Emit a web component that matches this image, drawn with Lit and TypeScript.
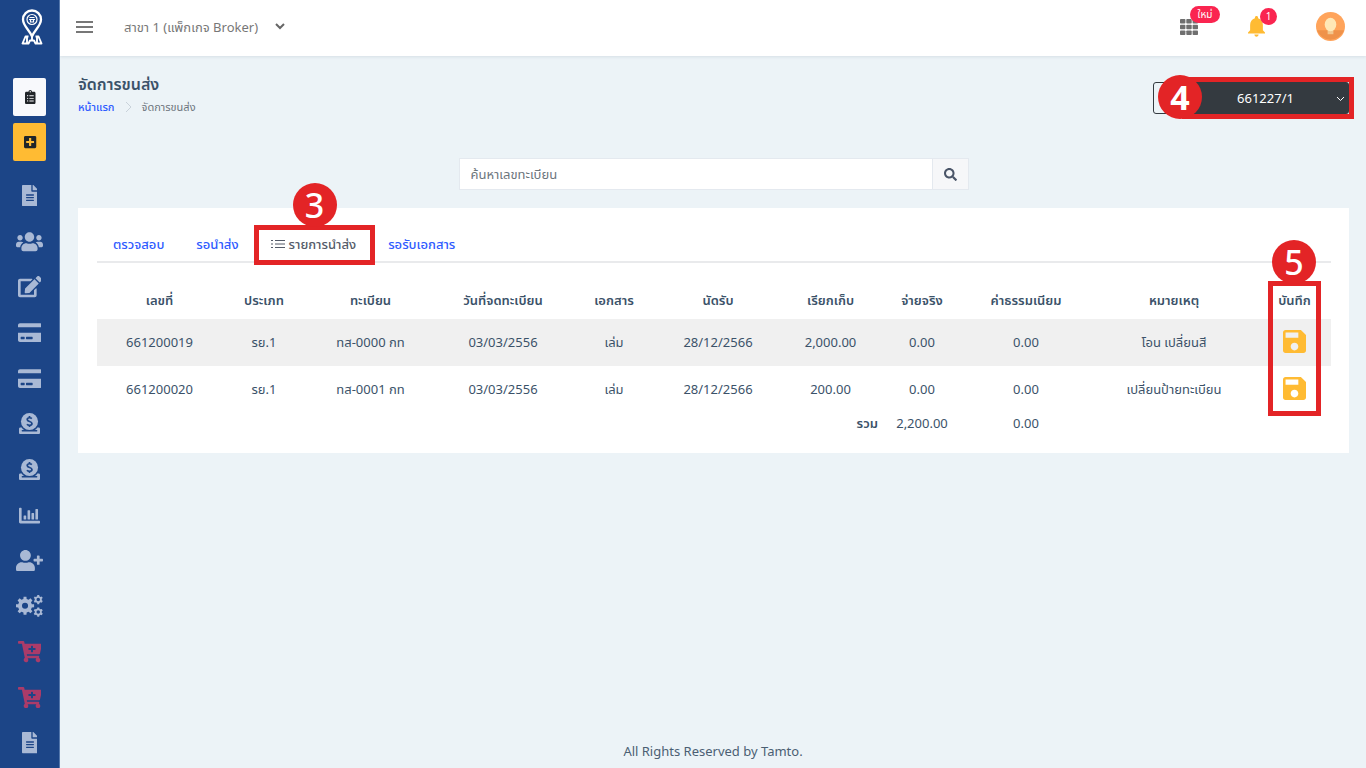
import { LitElement, html, css, svg } from "lit";
import { customElement, state } from "lit/decorators.js";
import { classMap } from "lit/directives/class-map.js";

/** Outline of a cog wheel with a round hole in its middle. */
const gear = (cx: number, cy: number, r: number, teeth: number, hole: number) => {
  const step = (Math.PI * 2) / teeth;
  const pt = (rad: number, a: number) =>
    `${(cx + rad * Math.cos(a)).toFixed(1)} ${(cy + rad * Math.sin(a)).toFixed(1)}`;
  let d = "";
  for (let i = 0; i < teeth; i++) {
    const a = i * step - Math.PI / 2;
    d += `${i ? "L" : "M"}${pt(r * 0.76, a - step * 0.3)}L${pt(r, a - step * 0.2)}L${pt(r, a + step * 0.2)}L${pt(r * 0.76, a + step * 0.3)}`;
  }
  return `${d}ZM${cx - hole} ${cy}a${hole} ${hole} 0 1 0 ${hole * 2} 0a${hole} ${hole} 0 1 0 ${-hole * 2} 0Z`;
};

const icons = {
  clipboard: svg`<svg viewBox="0 0 384 512" class="i14"><path fill="currentColor" d="M336 64h-80c0-35.300-28.700-64-64-64s-64 28.700-64 64H48C21.500 64 0 85.500 0 112v352c0 26.500 21.500 48 48 48h288c26.500 0 48-21.500 48-48V112c0-26.500-21.500-48-48-48zM96 424c-13.300 0-24-10.700-24-24s10.700-24 24-24 24 10.700 24 24-10.700 24-24 24zm0-96c-13.300 0-24-10.700-24-24s10.700-24 24-24 24 10.700 24 24-10.700 24-24 24zm0-96c-13.300 0-24-10.700-24-24s10.700-24 24-24 24 10.700 24 24-10.700 24-24 24zm96-192c13.300 0 24 10.700 24 24s-10.700 24-24 24-24-10.700-24-24 10.700-24 24-24zm128 368c0 4.400-3.600 8-8 8H168c-4.400 0-8-3.600-8-8v-16c0-4.400 3.600-8 8-8h144c4.400 0 8 3.600 8 8v16zm0-96c0 4.400-3.600 8-8 8H168c-4.400 0-8-3.600-8-8v-16c0-4.400 3.600-8 8-8h144c4.400 0 8 3.600 8 8v16zm0-96c0 4.400-3.600 8-8 8H168c-4.400 0-8-3.600-8-8v-16c0-4.400 3.600-8 8-8h144c4.400 0 8 3.600 8 8v16z"/></svg>`,
  plusSquare: svg`<svg viewBox="0 0 448 512" class="i14"><path fill="currentColor" d="M400 32H48C21.500 32 0 53.500 0 80v352c0 26.500 21.500 48 48 48h352c26.500 0 48-21.500 48-48V80c0-26.500-21.500-48-48-48zm-32 252c0 6.600-5.400 12-12 12h-92v92c0 6.600-5.400 12-12 12h-56c-6.600 0-12-5.400-12-12v-92H92c-6.600 0-12-5.400-12-12v-56c0-6.600 5.400-12 12-12h92v-92c0-6.600 5.400-12 12-12h56c6.600 0 12 5.400 12 12v92h92c6.600 0 12 5.400 12 12v56z"/></svg>`,
  file: svg`<svg viewBox="0 0 384 512"><path fill="currentColor" d="M224 136V0H24C10.700 0 0 10.700 0 24v464c0 13.300 10.700 24 24 24h336c13.300 0 24-10.700 24-24V160H248c-13.200 0-24-10.800-24-24zm64 236c0 6.600-5.400 12-12 12H108c-6.600 0-12-5.400-12-12v-8c0-6.600 5.400-12 12-12h168c6.600 0 12 5.400 12 12v8zm0-64c0 6.600-5.400 12-12 12H108c-6.600 0-12-5.400-12-12v-8c0-6.600 5.400-12 12-12h168c6.600 0 12 5.400 12 12v8zm0-72v8c0 6.600-5.400 12-12 12H108c-6.600 0-12-5.400-12-12v-8c0-6.600 5.400-12 12-12h168c6.600 0 12 5.400 12 12zm96-114.100v6.100H256V0h6.100c6.400 0 12.500 2.500 17 7l97.900 98c4.500 4.500 7 10.600 7 16.900z"/></svg>`,
  users: svg`<svg viewBox="0 0 640 512"><path fill="currentColor" d="M96 224c35.300 0 64-28.700 64-64s-28.700-64-64-64-64 28.700-64 64 28.700 64 64 64zm448 0c35.300 0 64-28.700 64-64s-28.700-64-64-64-64 28.700-64 64 28.700 64 64 64zm32 32h-64c-17.600 0-33.500 7.100-45.100 18.600 40.300 22.100 68.900 62 75.100 109.400h66c17.700 0 32-14.300 32-32v-32c0-35.300-28.700-64-64-64zm-256 0c61.900 0 112-50.100 112-112S381.900 32 320 32 208 82.100 208 144s50.100 112 112 112zm76.800 32h-8.300c-20.800 10-43.900 16-68.500 16s-47.600-6-68.500-16h-8.300C179.600 288 128 339.600 128 403.200V432c0 26.500 21.500 48 48 48h288c26.500 0 48-21.500 48-48v-28.800c0-63.600-51.600-115.200-115.200-115.200zm-223.700-13.400C161.500 263.100 145.600 256 128 256H64c-35.300 0-64 28.700-64 64v32c0 17.700 14.300 32 32 32h65.900c6.300-47.400 34.900-87.300 75.200-109.400z"/></svg>`,
  edit: svg`<svg viewBox="0 0 576 512"><path fill="currentColor" d="M402.600 83.200l90.200 90.200c3.800 3.800 3.800 10 0 13.800L274.400 405.600l-92.800 10.300c-12.400 1.400-22.900-9.100-21.500-21.500l10.300-92.800L388.800 83.200c3.800-3.800 10-3.800 13.800 0zm162-22.900l-48.800-48.800c-15.200-15.200-39.900-15.200-55.200 0l-35.400 35.400c-3.800 3.800-3.800 10 0 13.800l90.200 90.200c3.800 3.800 10 3.800 13.800 0l35.400-35.400c15.200-15.300 15.200-40 0-55.200zM384 346.200V448H64V128h229.800c3.200 0 6.200-1.300 8.500-3.500l40-40c7.600-7.600 2.200-20.500-8.500-20.500H48C21.500 64 0 85.500 0 112v352c0 26.500 21.500 48 48 48h352c26.500 0 48-21.500 48-48V306.200c0-10.700-12.900-16-20.500-8.500l-40 40c-2.200 2.300-3.500 5.300-3.500 8.500z"/></svg>`,
  card: svg`<svg viewBox="0 0 576 512"><path fill="currentColor" d="M0 432c0 26.500 21.500 48 48 48h480c26.500 0 48-21.500 48-48V256H0v176zm192-68c0-6.600 5.400-12 12-12h136c6.600 0 12 5.400 12 12v40c0 6.600-5.400 12-12 12H204c-6.600 0-12-5.400-12-12v-40zm-128 0c0-6.600 5.400-12 12-12h72c6.600 0 12 5.400 12 12v40c0 6.600-5.400 12-12 12H76c-6.600 0-12-5.400-12-12v-40zM576 80v48H0V80c0-26.500 21.500-48 48-48h480c26.500 0 48 21.500 48 48z"/></svg>`,
  donate: svg`<svg viewBox="0 0 512 512"><circle cx="256" cy="208" r="208" fill="currentColor"/><path d="M312 138c-12-14-30-22-54-22-34 0-58 18-58 44 0 62 116 34 116 98 0 28-26 46-60 46-26 0-48-10-62-28M256 76v40M256 302v40" fill="none" stroke="#1c4587" stroke-width="42"/><path fill="currentColor" d="M480 352h-33c-16 24-36 46-60 64h48c7 0 13 7 13 16s-6 16-13 16H77c-7 0-13-7-13-16s6-16 13-16h48c-24-18-44-40-60-64H32c-18 0-32 14-32 32v96c0 18 14 32 32 32h448c18 0 32-14 32-32v-96c0-18-14-32-32-32z"/></svg>`,
  chart: svg`<svg viewBox="0 0 512 512"><path fill="currentColor" d="M44 64h-24C9 64 0 73 0 84v332c0 18 14 32 32 32h464c9 0 16-7 16-16v-32c0-9-7-16-16-16H64V84c0-11-9-20-20-20z"/><path fill="currentColor" d="M125 256h38c7 0 13 6 13 13v70c0 7-6 13-13 13h-38c-7 0-13-6-13-13v-70c0-7 6-13 13-13zM221 128h38c7 0 13 6 13 13v198c0 7-6 13-13 13h-38c-7 0-13-6-13-13V141c0-7 6-13 13-13zM317 192h38c7 0 13 6 13 13v134c0 7-6 13-13 13h-38c-7 0-13-6-13-13V205c0-7 6-13 13-13zM413 96h38c7 0 13 6 13 13v230c0 7-6 13-13 13h-38c-7 0-13-6-13-13V109c0-7 6-13 13-13z"/></svg>`,
  userPlus: svg`<svg viewBox="0 0 640 512"><path fill="currentColor" d="M624 208h-64v-64c0-8.800-7.200-16-16-16h-32c-8.800 0-16 7.200-16 16v64h-64c-8.800 0-16 7.200-16 16v32c0 8.800 7.200 16 16 16h64v64c0 8.800 7.200 16 16 16h32c8.800 0 16-7.200 16-16v-64h64c8.800 0 16-7.200 16-16v-32c0-8.800-7.200-16-16-16zm-400 48c70.700 0 128-57.300 128-128S294.700 0 224 0 96 57.300 96 128s57.300 128 128 128zm89.600 32h-16.700c-22.200 10.200-46.900 16-72.900 16s-50.600-5.800-72.900-16h-16.700C60.200 288 0 348.200 0 422.400V464c0 26.500 21.500 48 48 48h352c26.500 0 48-21.500 48-48v-41.600c0-74.200-60.200-134.400-134.400-134.400z"/></svg>`,
  cogs: svg`<svg viewBox="0 0 640 512"><path fill="currentColor" fill-rule="evenodd" d="${gear(214, 256, 218, 8, 72)}${gear(528, 108, 112, 6, 42)}${gear(528, 404, 112, 6, 42)}"/></svg>`,
  cart: svg`<svg viewBox="0 0 576 512"><path fill="currentColor" fill-rule="evenodd" d="M504.700 320H211.600l6.500 32h268.400c15.400 0 26.800 14.300 23.400 29.300l-5.500 24.300c18.700 9.100 31.600 28.200 31.600 50.400 0 31.200-25.500 56.400-56.800 56-29.800-.400-54.400-24.600-55.200-54.400-.400-16.300 6.100-31 16.800-41.500H231.200c10.400 10.200 16.800 24.300 16.800 40 0 31.800-26.500 57.400-58.700 55.900-28.500-1.300-51.800-24.400-53.300-52.900-1.200-22 10.400-41.500 28.100-51.600L93.900 64H24C10.700 64 0 53.300 0 40V24C0 10.700 10.700 0 24 0h102.500c11.400 0 21.200 8 23.500 19.200l9.200 44.800H552c15.400 0 26.800 14.300 23.400 29.300l-47.300 208c-2.500 10.900-12.200 18.700-23.400 18.700zM408 168h-48v-40c0-8.800-7.200-16-16-16h-16c-8.800 0-16 7.200-16 16v40h-48c-8.800 0-16 7.200-16 16v16c0 8.800 7.200 16 16 16h48v40c0 8.800 7.200 16 16 16h16c8.800 0 16-7.200 16-16v-40h48c8.800 0 16-7.200 16-16v-16c0-8.800-7.200-16-16-16z"/></svg>`,
  search: svg`<svg viewBox="0 0 512 512" class="i13"><path fill="currentColor" d="M505 442.700L405.300 343c-4.500-4.500-10.600-7-17-7H372c27.600-35.300 44-79.700 44-128C416 93.100 322.900 0 208 0S0 93.100 0 208s93.100 208 208 208c48.300 0 92.700-16.400 128-44v16.300c0 6.400 2.500 12.500 7 17l99.700 99.700c9.400 9.400 24.600 9.400 33.900 0l28.300-28.300c9.400-9.400 9.400-24.600.1-34zM208 336c-70.700 0-128-57.200-128-128 0-70.700 57.200-128 128-128 70.700 0 128 57.200 128 128 0 70.700-57.200 128-128 128z"/></svg>`,
  save: svg`<svg viewBox="3 3 18 18"><path fill="currentColor" d="M17 3H5c-1.110 0-2 .9-2 2v14c0 1.100.89 2 2 2h14c1.100 0 2-.9 2-2V7l-4-4zm-5 16c-1.660 0-3-1.340-3-3s1.340-3 3-3 3 1.340 3 3-1.340 3-3 3zm3-10H5V5h10v4z"/></svg>`,
  bell: svg`<svg viewBox="4 2.500 16 19.500"><path fill="currentColor" d="M12 22c1.100 0 2-.9 2-2h-4c0 1.100.89 2 2 2zm6-6v-5c0-3.070-1.640-5.640-4.500-6.320V4c0-.83-.67-1.500-1.500-1.500s-1.500.67-1.500 1.500v.68C7.630 5.360 6 7.920 6 11v5l-2 2v1h16v-1l-2-2z"/></svg>`,
  grid: svg`<svg viewBox="0 0 18 16"><g fill="currentColor">${[0, 1, 2].map((r) => [0, 1, 2].map((c) => svg`<rect x="${c * 6.300}" y="${r * 5.700}" width="5.400" height="4.600" rx="0.800"/>`))}</g></svg>`,
  logo: svg`<svg viewBox="0 0 22 36" fill="none" stroke="#fff" stroke-linejoin="round"><path stroke-width="2.300" d="M11 27.500C9 21.500 2 17 2 10.500a9 9 0 0 1 18 0C20 17 13 21.500 11 27.500z"/><circle cx="11" cy="10.500" r="5" stroke-width="1.200"/><path stroke-width="1.200" d="M8.500 8.500h5M8 10.500h6M9.500 10.500v2.500h3v-2.500"/><path stroke-width="1.900" d="M7.500 27.500h-3L1.500 34.500h6L9 31.500h4l1.500 3h6L17.500 27.500h-3M6 28.500v5M16 28.500v5M11 27v4"/></svg>`,
};

interface NavItem { label: string; icon: keyof typeof icons; size: string; danger?: boolean }

const NAV: NavItem[] = [
  { label: "เอกสาร", icon: "file", size: "w16" },
  { label: "ลูกค้า", icon: "users", size: "w27" },
  { label: "แก้ไข", icon: "edit", size: "w24" },
  { label: "บัตร", icon: "card", size: "w24" },
  { label: "ชำระเงิน", icon: "card", size: "w24" },
  { label: "รายรับ", icon: "donate", size: "w21" },
  { label: "รายจ่าย", icon: "donate", size: "w21" },
  { label: "รายงาน", icon: "chart", size: "w21" },
  { label: "เพิ่มผู้ใช้", icon: "userPlus", size: "w27" },
  { label: "ตั้งค่า", icon: "cogs", size: "w27" },
  { label: "สั่งซื้อ", icon: "cart", size: "w24", danger: true },
  { label: "สั่งซื้อเพิ่ม", icon: "cart", size: "w24", danger: true },
  { label: "คู่มือ", icon: "file", size: "w16" },
];

const COLUMNS: [string, number][] = [
  ["เลขที่", 125], ["ประเภท", 84], ["ทะเบียน", 129], ["วันที่จดทะเบียน", 136],
  ["เอกสาร", 86], ["นัดรับ", 122], ["เรียกเก็บ", 103], ["จ่ายจริง", 80],
  ["ค่าธรรมเนียม", 128], ["หมายเหตุ", 168], ["บันทึก", 73],
];
const TOTAL = COLUMNS.reduce((sum, [, w]) => sum + w, 0);

const ROWS = [
  ["661200019", "รย.1", "ทส-0000 กท", "03/03/2556", "เล่ม", "28/12/2566", "2,000.00", "0.00", "0.00", "โอน เปลี่ยนสี"],
  ["661200020", "รย.1", "ทส-0001 กท", "03/03/2556", "เล่ม", "28/12/2566", "200.00", "0.00", "0.00", "เปลี่ยนป้ายทะเบียน"],
];

const TABS = ["ตรวจสอบ", "รอนำส่ง", "รายการนำส่ง", "รอรับเอกสาร"];

const base = css`
  *, *::before, *::after { box-sizing: border-box; }
  button, input, select { font: inherit; color: inherit; margin: 0; }
  button { background: none; border: 0; padding: 0; cursor: pointer; }
  a { text-decoration: none; }
  svg { display: block; }
`;

@customElement("side-nav")
export class SideNav extends LitElement {
  static styles = [base, css`
    :host { display: flex; flex-direction: column; align-items: center; width: 60px; height: 100vh;
      position: sticky; top: 0; flex: none; background: #1c4587; border-right: 1px solid #5578ac; padding-bottom: 2px; }
    .logo { width: 22px; margin: 9px 0 0 5px; }
    .quick { display: flex; flex-direction: column; gap: 7px; margin-top: 33px; }
    .quick button { display: grid; place-items: center; width: 33px; height: 38px; padding-left: 2px; border-radius: 2px; color: #212529; }
    .light { background: #f8f9fc; }
    .amber { background: #ffbb33; }
    .i14 { height: 14px; }
    nav { flex: 1; display: flex; flex-direction: column; width: 100%; margin-top: 12px; }
    nav a { flex: 1; display: grid; place-items: center; color: #a9b9d5; }
    nav .danger { color: #ab3b69; }
    .w16 { width: 16px; } .w21 { width: 21px; } .w24 { width: 24px; } .w27 { width: 27px; }
  `];
  render() {
    return html`
      <div class="logo">${icons.logo}</div>
      <div class="quick">
        <button class="light" aria-label="รายการงาน">${icons.clipboard}</button>
        <button class="amber" aria-label="เพิ่มงาน">${icons.plusSquare}</button>
      </div>
      <nav>${NAV.map((n) => html`
        <a href="#" aria-label=${n.label} class=${classMap({ danger: !!n.danger })}><span class=${n.size}>${icons[n.icon]}</span></a>`)}
      </nav>`;
  }
}

@customElement("top-bar")
export class TopBar extends LitElement {
  static styles = [base, css`
    :host { display: flex; align-items: center; height: 56px; padding: 0 21px 3px 16px; background: #fff; color: #777; font-size: 13px;
      box-shadow: 0 1px 3px rgba(60, 90, 110, .12); }
    .menu { width: 17px; display: grid; gap: 3px; }
    .menu span { height: 2px; background: #777; }
    .branch { display: flex; align-items: center; gap: 17px; margin-left: 31px; }
    .branch svg { width: 10px; }
    .tools { display: flex; align-items: center; margin-left: auto; }
    .tools button { position: relative; }
    .apps { width: 18px; color: #6f6f6f; margin-right: 50px; }
    .bell { width: 17px; color: #ffbb33; margin-right: 51px; }
    .badge { position: absolute; display: grid; place-items: center; background: #fa2550; color: #fff; border-radius: 9px; font-size: 10px; line-height: 17px; height: 17px; }
    .new { width: 30px; left: 10px; top: -13px; }
    .one { width: 17px; left: 12px; top: -8px; }
    .avatar svg { width: 29px; }
  `];
  render() {
    return html`
      <button class="menu" aria-label="เมนู"><span></span><span></span><span></span></button>
      <button class="branch">สาขา 1 (แพ็กเกจ Broker)
        <svg viewBox="0 0 10 7" fill="none" stroke="#666" stroke-width="2"><path d="M1 1l4 4 4-4"/></svg></button>
      <div class="tools">
        <button class="apps" aria-label="แอป">${icons.grid}<span class="badge new">ใหม่</span></button>
        <button class="bell" aria-label="การแจ้งเตือน">${icons.bell}<span class="badge one">1</span></button>
        <button class="avatar" aria-label="บัญชี">
          <svg viewBox="0 0 30 30"><circle cx="15" cy="15" r="15" fill="#ffa45b"/><path d="M1 19h28a15 15 0 0 1-28 0z" fill="#ef924a"/><path d="M12 18h6v5h-6z" fill="#f3c68d"/><ellipse cx="15" cy="13" rx="6" ry="7" fill="#ffe8b6"/></svg>
        </button>
      </div>`;
  }
}

@customElement("app-root")
export class AppRoot extends LitElement {
  @state() private active = 2;

  static styles = [base, css`
    :host { display: flex; min-height: 100vh; background: #ecf3f7; color: #3b5269;
      font-family: "Noto Sans", "Noto Sans Thai", sans-serif; font-size: 13px; line-height: 20px; }
    .page { flex: 1; min-width: 0; display: flex; flex-direction: column; }
    main { flex: 1; padding: 16px 17px 0 18px; }
    .head { display: flex; justify-content: space-between; align-items: flex-start; }
    h1 { margin: 0; font-size: 16px; line-height: 24px; font-weight: 600; }
    .crumbs { display: flex; align-items: center; gap: 10px; font-size: 11px; color: #6c757d; line-height: 22px; }
    .crumbs a { color: #2f5bff; font-weight: 500; }
    .crumbs svg { width: 7px; }
    .batch { position: relative; display: flex; width: 196px; height: 32px; margin-top: 10px; }
    .batch label { width: 29px; border: 1px solid #343a40; border-radius: 3px 0 0 3px; }
    .batch select { flex: 1; appearance: none; border: 0; padding: 0; border-radius: 0 3px 3px 0; background: #343a40; color: #fff; text-align: center; text-align-last: center; }
    .batch svg { position: absolute; right: 4px; top: 14px; width: 9px; }
    .search { display: flex; width: 510px; max-width: 100%; height: 32px; margin: 40px auto 0; border: 1px solid #e4e9ef; background: #fff; }
    .search input { flex: 1; min-width: 0; border: 0; padding: 0 11px; background: none; outline: 0; }
    .search input::placeholder { color: #6c757d; opacity: 1; }
    .search button { width: 36px; display: grid; place-items: center; background: #f6f7f9; border-left: 1px solid #e4e9ef; color: #4a5568; }
    .i13 { width: 13px; }
    .card { margin-top: 18px; background: #fff; padding: 18px 18px 18px 19px; }
    .tabs { display: flex; border-bottom: 2px solid #e9eaec; height: 37px; }
    .tab { position: relative; padding: 0 16px; color: #2f5bff; font-weight: 500; }
    .tab.on { color: #545b69; display: flex; align-items: center; gap: 4px; }
    .tab svg { width: 14px; }
    .sheet { position: relative; margin-top: 17px; }
    table { width: 100%; border-collapse: collapse; table-layout: fixed; text-align: center; }
    th, td { padding: 0 4px 2px; font-weight: 400; height: 47px; }
    thead th { font-weight: 600; height: 39px; padding-bottom: 0; white-space: nowrap; }
    tbody tr:nth-child(odd) { background: #f0f0f0; }
    tfoot th, tfoot td { height: 22px; }
    tfoot th { font-weight: 600; text-align: right; }
    .save { width: 23px; color: #ffbb33; vertical-align: middle; }
    footer { text-align: center; padding: 7px 0; color: #4b5f73; }
    .mark { position: absolute; border: 5px solid #e32426; pointer-events: none; }
    .num { position: absolute; display: grid; place-items: center; width: 44px; height: 44px; border-radius: 50%;
      background: #e32426; color: #fff; font-size: 34px; line-height: 44px; font-weight: 500; pointer-events: none; }
    .m3 { inset: -1px -3px -4px -1px; }
    .n3 { left: 38px; top: -43px; }
    .m4 { inset: -5px -5px -5px 29px; }
    .n4 { left: 5px; top: -7px; font-weight: 700; }
    .m5 { right: 10px; top: 1px; width: 53px; height: 135px; }
    .n5 { right: 15px; top: -40px; }
  `];

  render() {
    return html`
      <side-nav></side-nav>
      <div class="page">
        <top-bar></top-bar>
        <main>
          <div class="head">
            <div>
              <h1>จัดการขนส่ง</h1>
              <div class="crumbs"><a href="#">หน้าแรก</a>
                <svg viewBox="0 0 7 12" fill="none" stroke="#c9d2da"><path d="M1 1l5 5-5 5"/></svg>
                <span>จัดการขนส่ง</span></div>
            </div>
            <div class="batch">
              <label for="batch" aria-label="รอบนำส่ง"></label>
              <select id="batch" aria-label="รอบนำส่ง"><option>661227/1</option></select>
              <svg viewBox="0 0 9 6" fill="none" stroke="#fff"><path d="M1 1l3.500 3.500L8 1"/></svg>
              <span class="mark m4"></span><span class="num n4">4</span>
            </div>
          </div>
          <form class="search" @submit=${(e: Event) => e.preventDefault()}>
            <input type="text" aria-label="ค้นหาเลขทะเบียน" placeholder="ค้นหาเลขทะเบียน">
            <button aria-label="ค้นหา">${icons.search}</button>
          </form>
          <section class="card">
            <div class="tabs" role="tablist">${TABS.map((t, i) => html`
              <button role="tab" class=${classMap({ tab: true, on: i === this.active })} @click=${() => (this.active = i)}>
                ${i === this.active ? html`<svg viewBox="0 0 14 10" stroke="currentColor"><path d="M4 1.500h10M4 5h10M4 8.500h10M0 1.500h2M0 5h2M0 8.500h2"/></svg>` : ""}<span>${t}</span>
                ${i === 2 ? html`<span class="mark m3"></span><span class="num n3">3</span>` : ""}
              </button>`)}
            </div>
            <div class="sheet">
              <table>
                <colgroup>${COLUMNS.map(([, w]) => html`<col style="width:${(w / TOTAL) * 100}%">`)}</colgroup>
                <thead><tr>${COLUMNS.map(([c]) => html`<th scope="col">${c}</th>`)}</tr></thead>
                <tbody>${ROWS.map((r) => html`<tr>${r.map((c) => html`<td>${c}</td>`)}
                  <td><button class="save" aria-label="บันทึก">${icons.save}</button></td></tr>`)}</tbody>
                <tfoot><tr><th colspan="7" scope="row">รวม</th><td>2,200.00</td><td>0.00</td><td></td><td></td></tr></tfoot>
              </table>
              <span class="mark m5"></span><span class="num n5">5</span>
            </div>
          </section>
        </main>
        <footer>All Rights Reserved by Tamto.</footer>
      </div>`;
  }
}
